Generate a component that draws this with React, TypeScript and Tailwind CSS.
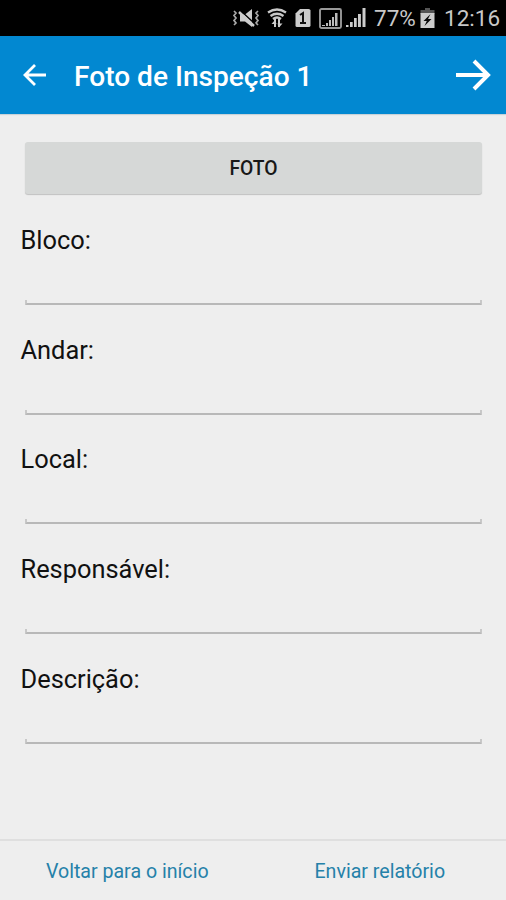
import React from 'react';

const fields = ['Bloco:', 'Andar:', 'Local:', 'Responsável:', 'Descrição:'];

const MuteIcon = () => (
  <svg className="w-7 h-5 shrink-0" viewBox="0 0 28 20" fill="none">
    <path d="M2 3l2 2-2 2.500 2 2.500-2 2.500 2 2.500-2 2M26 3l-2 2 2 2.500-2 2.500 2 2.500-2 2.500 2 2" stroke="#aaa" strokeWidth="1.700" />
    <path d="M8 6.500h5L20 1v18l-7-5.500H8z" fill="#ccc" />
    <path d="M9 3L23 16" stroke="#000" strokeWidth="1.500" />
    <path d="M7 4L22 18" stroke="#ccc" strokeWidth="2.400" />
  </svg>
);

const WifiIcon = () => (
  <svg className="w-5 h-5 shrink-0" viewBox="0 0 20 20" fill="none">
    <path d="M1 4.500Q10-1.500 19 4.500M3.500 8Q10 3.500 16.500 8M6 11Q10 8 14 11" stroke="#c8c8c8" strokeWidth="2.300" />
    <path d="M8 11v8M12 19v-8" stroke="#ccc" strokeWidth="2" />
    <path d="M4.500 16l3.500-4 1.500 4zM10.500 15.500H15.500L12 19.500z" fill="#ccc" />
  </svg>
);

const SimIcon = () => (
  <svg className="w-4 h-5 shrink-0" viewBox="0 0 16 20">
    <path d="M5 1h8.500Q15.500 1 15.500 2.500v15q0 1.500-2 1.500h-11.500Q.5 19 .5 17.500V5.500z" fill="#ccc" />
    <path d="M5 7l3-2v10M5 15h6" fill="none" stroke="#111" strokeWidth="2" />
  </svg>
);

const BoxedSignalIcon = () => (
  <svg className="w-[23px] h-[21px] shrink-0" viewBox="0 0 23 21">
    <rect x="1" y="1" width="21" height="19" rx="1.500" fill="none" stroke="#999" strokeWidth="1.900" />
    <path d="M3 18v-1h3v1zM7 18v-3h2v3zM10 18v-6h2v6zM13 18V9h2v9zM16 18V5h2.500v13z" fill="#bbb" />
  </svg>
);

const SignalIcon = () => (
  <svg className="w-5 h-5 shrink-0" viewBox="0 0 20 20">
    <path d="M0 19v-2h2.500v2zM4 19v-5h2.700v5zM8 19v-9h2.700v9zM12 19V6h2.900v13zM16.500 19V0h3v19z" fill="#ccc" />
  </svg>
);

const BatteryIcon = () => (
  <svg className="w-[15px] h-[21px] shrink-0" viewBox="0 0 15 21">
    <path d="M5 0h5v2h4.500v4H.5V2H5z" fill="#555" />
    <path d="M.5 5h14v15H.5z" fill="#ccc" />
    <path d="M10.500 6L3.500 13h3.300L4.500 18l7-7H8z" fill="#080808" />
  </svg>
);

const StatusBar: React.FC = () => (
  <div className="flex h-9 items-center bg-black pl-[232px] text-[#c8c8c8]">
    <MuteIcon />
    <div className="ml-[7px] flex"><WifiIcon /></div>
    <div className="ml-2 flex"><SimIcon /></div>
    <div className="ml-2 flex"><BoxedSignalIcon /></div>
    <div className="ml-1 flex"><SignalIcon /></div>
    <span className="ml-2 w-[46px] whitespace-nowrap pt-0.5 text-[22.500px]">77%</span>
    <BatteryIcon />
    <span className="ml-[9px] whitespace-nowrap pt-0.5 text-[22.500px]">12:16</span>
  </div>
);

const Header: React.FC = () => (
  <header className="flex h-[78px] items-center bg-[#0288d1] pl-[22px] pr-[15px] text-white shadow-[0_1px_1px_#c8d2d8]">
    <button aria-label="Voltar">
      <svg className="h-6 w-6" viewBox="0 0 24 24" fill="none" stroke="currentColor" strokeWidth="2.800">
        <path d="M24 12H3M13 2L3 12l10 10" />
      </svg>
    </button>
    <h1 className="ml-7 mt-1 text-[28.100px] font-medium leading-8">Foto de Inspeção 1</h1>
    <button aria-label="Avançar" className="ml-auto">
      <svg className="h-9 w-9" viewBox="0 0 36 36" fill="none" stroke="currentColor" strokeWidth="4">
        <path d="M1 18h30M19 4l14 14-14 14" />
      </svg>
    </button>
  </header>
);

const Field: React.FC<{ label: string }> = ({ label }) => (
  <label className="block h-[109.600px] pl-[20.500px] pr-5">
    <span className="block h-16 text-[25.400px] leading-[30px] text-[#111]">{label}</span>
    <span className="block pl-[4.500px] pr-1">
      <input className="block h-4 w-full bg-transparent outline-none" />
      <span className="-mt-[5px] block h-[5px] rounded-b-[1px] border-x-2 border-b-2 border-x-[#c8c8c8] border-b-[#b8b8b8]" />
    </span>
  </label>
);

export default function App() {
  return (
    <div className="flex h-[900px] w-[506px] flex-col overflow-hidden bg-[#eee] font-[Roboto,sans-serif]">
      <StatusBar />
      <Header />
      <main className="flex-1 pt-7">
        <div className="pl-[25px] pr-6">
          <button className="h-[52px] w-full rounded-[3px] bg-[#d6d8d7] pt-[3px] text-[19.300px] font-medium text-[#181818] shadow-[0_1px_1px_#c0c0c0]">
            FOTO
          </button>
        </div>
        <div className="mt-[31.300px]">
          {fields.map((label) => (
            <Field key={label} label={label} />
          ))}
        </div>
      </main>
      <footer className="grid h-[61px] grid-cols-2 border-t-2 border-[#dfdfdf] pl-px pt-0.5 text-[19.600px] text-[#2581a9]">
        <button>Voltar para o início</button>
        <button>Enviar relatório</button>
      </footer>
    </div>
  );
}
